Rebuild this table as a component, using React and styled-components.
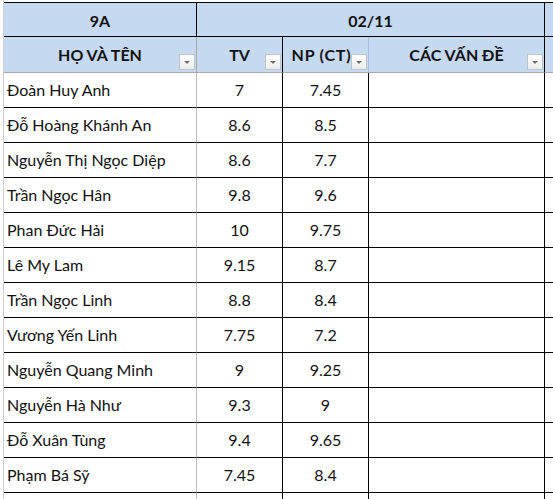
import React from "react";
import styled, { createGlobalStyle } from "styled-components";

const Global = createGlobalStyle`
  html, body { margin: 0; padding: 0; background: #ffffff; }
  body { font-family: Lato, "Noto Sans", sans-serif; color: #111; }
`;

const Sheet = styled.div`
  margin-left: 3px;
  border-left: 1px solid #d0d0d0;
  padding-top: 2px;
  height: 497px;
  overflow: hidden;
`;

const Grid = styled.div`
  display: grid;
  grid-template-columns: 193px 86px 86px 176px 1fr;
  grid-template-rows: 34px 36px repeat(12, 35px) 35px;
  border-top: 1px solid #000;
`;

const BLUE = "#c5d9f1";

const GroupCell = styled.div`
  box-sizing: border-box;
  grid-column: span ${(p) => p.$span || 1};
  background: ${BLUE};
  border-bottom: 1px solid #000;
  border-right: ${(p) => (p.$noRight ? "none" : "1px solid #000")};
  display: flex;
  align-items: center;
  justify-content: center;
  padding-top: 2px;
  font-weight: 700;
  font-size: 16px;
`;

const HeadCell = styled.div`
  box-sizing: border-box;
  position: relative;
  background: ${BLUE};
  border-bottom: 1px solid #a9a9a9;
  border-right: ${(p) => (p.$right ? `1px solid ${p.$right}` : "none")};
  display: flex;
  align-items: center;
  justify-content: center;
  padding: 0 ${(p) => p.$pr || 0}px 1px 0;
  font-weight: 700;
  font-size: 16px;
  letter-spacing: ${(p) => p.$ls || 0}px;
  white-space: nowrap;
`;

const Cell = styled.div`
  box-sizing: border-box;
  border-bottom: 1px solid ${(p) => p.$bottom || "#000"};
  border-right: ${(p) => (p.$right ? `1px solid ${p.$right}` : "none")};
  display: flex;
  align-items: center;
  justify-content: ${(p) => (p.$left ? "flex-start" : "center")};
  padding: 0 0 1px ${(p) => (p.$left ? 3 : 0)}px;
  font-size: 16px;
  white-space: nowrap;
`;

const FilterButton = styled.span`
  position: absolute;
  right: 1px;
  bottom: 2px;
  width: 16px;
  height: 16px;
  box-sizing: border-box;
  border: 1px solid #c3c3c3;
  background: linear-gradient(#ffffff, #ececec);
  display: flex;
  align-items: center;
  justify-content: center;
  &::after {
    content: "";
    width: 0;
    height: 0;
    border-left: 3px solid transparent;
    border-right: 3px solid transparent;
    border-top: 3px solid #6f6f6f;
    margin-top: 1px;
  }
`;

const rows = [
  ["Đoàn Huy Anh", "7", "7.45"],
  ["Đỗ Hoàng Khánh An", "8.6", "8.5"],
  ["Nguyễn Thị Ngọc Diệp", "8.6", "7.7"],
  ["Trần Ngọc Hân", "9.8", "9.6"],
  ["Phan Đức Hải", "10", "9.75"],
  ["Lê My Lam", "9.15", "8.7"],
  ["Trần Ngọc Linh", "8.8", "8.4"],
  ["Vương Yến Linh", "7.75", "7.2"],
  ["Nguyễn Quang Minh", "9", "9.25"],
  ["Nguyễn Hà Như", "9.3", "9"],
  ["Đỗ Xuân Tùng", "9.4", "9.65"],
  ["Phạm Bá Sỹ", "7.45", "8.4"],
];

export default function App() {
  return (
    <>
      <Global />
      <Sheet>
        <Grid>
          <GroupCell>9A</GroupCell>
          <GroupCell $span={3}>02/11</GroupCell>
          <GroupCell $noRight />

          <HeadCell $right="#a9a9a9">
            HỌ VÀ TÊN
            <FilterButton />
          </HeadCell>
          <HeadCell $right="#000">
            TV
            <FilterButton />
          </HeadCell>
          <HeadCell $right="#a9bedb" $pr={8} $ls={0.8}>
            NP (CT)
            <FilterButton />
          </HeadCell>
          <HeadCell $right="#000">
            CÁC VẤN ĐỀ
            <FilterButton />
          </HeadCell>
          <HeadCell />

          {rows.map(([name, tv, np]) => (
            <React.Fragment key={name}>
              <Cell $left $right="#bdbdbd">{name}</Cell>
              <Cell $right="#000">{tv}</Cell>
              <Cell $right="#000">{np}</Cell>
              <Cell $right="#000" />
              <Cell />
            </React.Fragment>
          ))}

          <Cell $right="#bdbdbd" $bottom="#d0d0d0" />
          <Cell $right="#000" $bottom="#d0d0d0" />
          <Cell $right="#000" $bottom="#d0d0d0" />
          <Cell $right="#000" $bottom="#d0d0d0" />
          <Cell $bottom="#d0d0d0" />
        </Grid>
      </Sheet>
    </>
  );
}
